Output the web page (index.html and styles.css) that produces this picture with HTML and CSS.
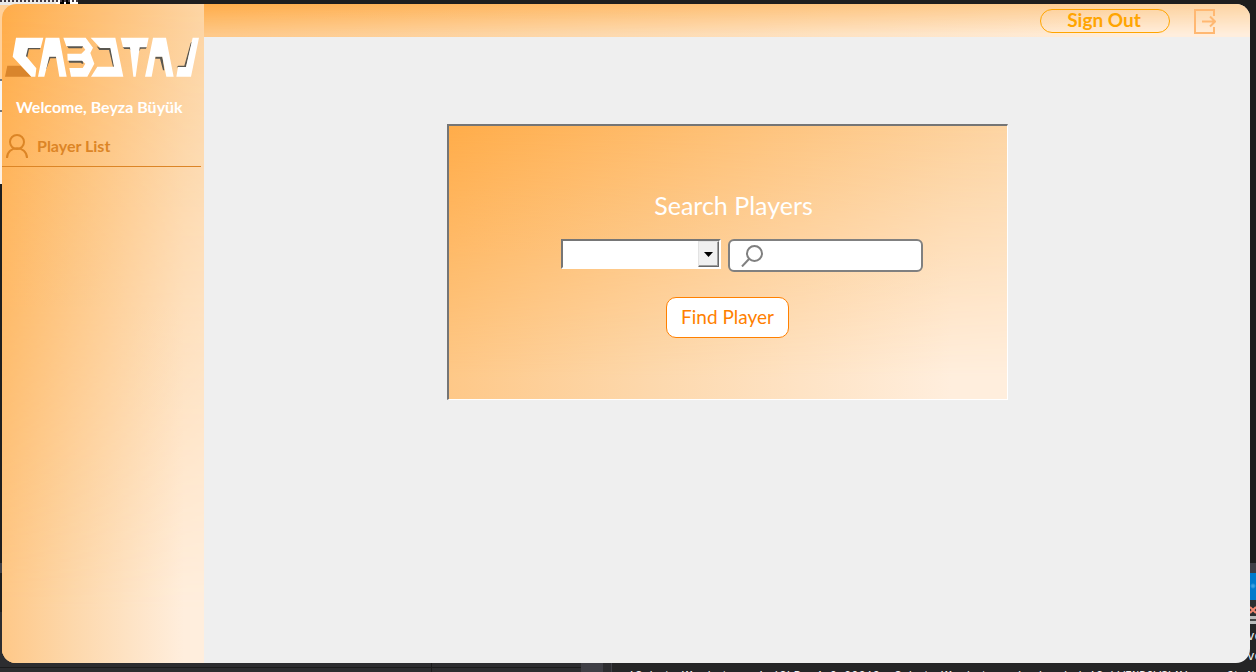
FILE: index.html
```html
<!DOCTYPE html>
<html lang="en">
<head>
<meta charset="utf-8">
<title>Sabotaj</title>
<link rel="stylesheet" href="styles.css">
</head>
<body>
<div class="desktop" aria-hidden="true">
  <div class="toolbar-scrap"></div>
  <div class="dialog-scrap"></div>
  <div class="blue-scrap"></div>
  <div class="error-scrap"><svg viewBox="0 0 7 16"><path d="M1 7L7 13M7 7L1 13"/></svg></div>
  <div class="tab-scrap"></div>
  <pre class="console">'SabotajMarket.exe' (CLR v4.0.30319: SabotajMarket.exe): Loaded 'C:\WINDOWS\Microsoft.ve
'SabotajMarket.exe' (CLR v4.0.30319: SabotajMarket.exe): Loaded 'C:\WINDOWS\Microsoft.ve
'SabotajMarket.exe' (CLR v4.0.30319: SabotajMarket.exe): Loaded 'C:\WINDOWS\Microsoft.Ne</pre>
</div>
<div class="window">
  <aside class="sidebar glow">
    <svg class="logo" viewBox="15 112 585 120" role="img" aria-label="Sabotaj">
      <path fill="#d9852c" d="M22 198H62L94 231H15z"/>
      <g fill="#5a5750">
        <path d="M80 144H121L120 149H87L82 172H76z"/>
        <path d="M147 170H168V176H151L139 208H134z"/>
        <path d="M200 138H250L246 146H206zM204 180H248L250 192H246L242 189H208z"/>
        <path d="M290 140L299 144H332L343 201H339L327 151H298z"/>
        <path d="M368 142H391L393 152 388 148H373zM418 142H440L438 147H422L417 155z"/>
        <path d="M466 170H487L493 212H489L480 177H466z"/>
        <path d="M576 126L558 203H530L535 198H553L572 130z"/>
      </g>
      <g fill="#fff">
        <path d="M48 114H130L122 145H84L78 169 109 206 106 231H94L38 171z"/>
        <path d="M137 114H178L200 231H178L168 171H148L133 231H114z"/>
        <path d="M190 114H257L279 144 271 160 283 192 262 231H213L208 205H248L256 192 246 183H203L202 162H244L256 150 248 140H199z"/>
        <path d="M272 114H346L370 231H273L292 201H342L331 145H301z"/>
        <path d="M362 114H446L440 143H419L407 231H400L390 143H369z"/>
        <path d="M459 114H498L521 231H499L487 171H466L455 231H435z"/>
        <path d="M578 114H597L573 231H529L534 202H558z"/>
      </g>
    </svg>
    <p class="welcome">Welcome, Beyza Büyük</p>
    <nav>
      <a class="nav-link" href="#">
        <svg class="user-icon" viewBox="0 0 24 26" aria-hidden="true"><circle cx="12" cy="9" r="7"/><path d="M2 25C2 12 22 12 22 25"/></svg>
        Player List
      </a>
    </nav>
  </aside>
  <div class="content">
    <header class="topbar glow">
      <button class="signout" type="button">Sign Out</button>
      <button class="exit" type="button" aria-label="Exit">
        <svg viewBox="0 0 22 25" aria-hidden="true"><path d="M20 7V1H1V24H20V18M8 12.500H21M16 7.500L21 12.500L16 17.500"/></svg>
      </button>
    </header>
    <main class="main">
      <form class="panel glow">
        <h1 class="title">Search Players</h1>
        <div class="fields">
          <div class="combo">
            <select aria-label="Search by"><option></option></select>
            <span class="combo-arrow"><svg viewBox="0 0 9 5" aria-hidden="true"><path d="M0 0H9L4.500 5z"/></svg></span>
          </div>
          <label class="search">
            <svg viewBox="0 0 22 22" aria-hidden="true"><circle cx="13.500" cy="8.500" r="7.500"/><path d="M8 14L1 21.500"/></svg>
            <input type="text" aria-label="Search">
          </label>
        </div>
        <button class="find" type="button">Find Player</button>
      </form>
    </main>
  </div>
</div>
</body>
</html>
```
FILE: styles.css
```css
* { box-sizing: border-box; }

body {
  margin: 0;
  min-height: 100vh;
  display: flex;
  padding: 4px 6px 9px 2px;
  background: #1e1e1e;
  font-family: Lato, "Open Sans", sans-serif;
  position: relative;
  overflow: hidden;
}

button, input, select { font: inherit; }

/* Desktop showing around the window */
.desktop {
  position: absolute;
  inset: 0;
  overflow: hidden;
  background:
    linear-gradient(#1b1b1c, #1b1b1c) 0 667px / 581px 1px no-repeat,
    linear-gradient(#1b1b1c, #1b1b1c) 431px 100% / 1px 12px no-repeat,
    linear-gradient(#3f3f46, #3f3f46) 581px 100% / 22px 12px no-repeat,
    linear-gradient(#3f3f46, #3f3f46) 611px 100% / 1px 12px no-repeat,
    linear-gradient(#2d2d30, #2d2d30) 0 100% / 612px 60px no-repeat,
    linear-gradient(#252526, #252526) 100% 100% / 644px 72px no-repeat,
    linear-gradient(#3f3f46, #3f3f46) 0 563px / 100% 10px no-repeat,
    #1e1e1e;
}

.toolbar-scrap {
  position: absolute;
  top: 0;
  left: 0;
  width: 78px;
  height: 5px;
  background: linear-gradient(90deg, transparent 56px, #fff 56px 60px, #000 60px 64px, #fff 64px 66px, #000 66px 70px, #fff 70px), #e8e8e8;
  border-top: 2px dotted #403840;
}

.dialog-scrap {
  position: absolute;
  top: 5px;
  left: 0;
  width: 16px;
  height: 179px;
  background: linear-gradient(#ffd09a 74px, #777 74px 76px, #f6f6f6 76px 105px, #777 105px 107px, #fdf0e2 107px);
}

.blue-scrap, .error-scrap, .tab-scrap {
  position: absolute;
  right: 0;
  width: 7px;
}

.blue-scrap { top: 573px; height: 27px; background: radial-gradient(circle at 4px 13px, #3da0e0 1px, #007acc 3px); }
.error-scrap { top: 600px; height: 16px; background: #2d2d30; }
.error-scrap svg { display: block; width: 7px; height: 16px; fill: none; stroke: #f48771; stroke-width: 2; }
.tab-scrap { top: 616px; height: 8px; background: linear-gradient(#bbb 3px, #444 3px 5px, #bbb 5px); }

.console {
  position: absolute;
  top: 627px;
  left: 628px;
  margin: 0;
  color: #f1f1f1;
  font: 12px/20px "Liberation Mono", monospace;
}

/* Application window */
.window {
  flex: 1;
  display: flex;
  position: relative;
  overflow: hidden;
  border-radius: 14px;
  background: #efefef;
}

/* Four-corner gradient: one ramp along the top, another fading in toward the bottom */
.glow {
  position: relative;
  isolation: isolate;
  background: linear-gradient(90deg, #ffad4a, #fdd5a4);
}

.glow::before {
  content: "";
  position: absolute;
  inset: 0;
  z-index: -1;
  background: linear-gradient(90deg, #fec888, #fdd8ac 36%, #ffeedd 90%);
  -webkit-mask-image: linear-gradient(transparent, #000 92%);
  mask-image: linear-gradient(transparent, #000 92%);
}

.sidebar { width: 202px; padding-top: 33px; }

.logo { display: block; width: 195px; height: 40px; margin-left: 3px; }

.welcome {
  margin: 20px 0 0 14px;
  color: #fff;
  font-size: 16px;
  font-weight: 700;
  line-height: 20px;
}

.nav-link {
  display: flex;
  align-items: center;
  gap: 8px;
  height: 42px;
  margin: 8px 3px 0 0;
  padding-left: 3px;
  border-bottom: 1px solid #dc8526;
  color: #dc8526;
  font-size: 16px;
  font-weight: 700;
  text-decoration: none;
}

.user-icon { width: 24px; height: 26px; fill: none; stroke: #dc8526; stroke-width: 2; }

.content { flex: 1; display: flex; flex-direction: column; }

.topbar {
  height: 33px;
  display: flex;
  align-items: center;
  justify-content: flex-end;
  gap: 24px;
  padding: 1px 34px 0 0;
}

.signout {
  width: 130px;
  height: 24px;
  padding: 0 2px 2px 0;
  border: 1px solid #ffa500;
  border-radius: 12px;
  background: transparent;
  color: #ffa500;
  font-size: 19px;
  font-weight: 700;
  line-height: 20px;
}

.exit { display: flex; padding: 0; border: 0; background: none; }
.exit svg { width: 22px; height: 25px; fill: none; stroke: #ffb872; stroke-width: 2; }

.main { flex: 1; padding-top: 87px; }

.panel {
  display: flex;
  flex-direction: column;
  align-items: center;
  width: 561px;
  height: 276px;
  margin: 0 auto;
  padding-top: 63px;
  border: solid;
  border-width: 2px 1px 1px 2px;
  border-color: #757575 #fff #fff #757575;
}

.title {
  margin: 0;
  padding-left: 12px;
  color: #fff;
  font-size: 25px;
  font-weight: 400;
  line-height: 32px;
}

.fields { display: flex; align-items: flex-start; gap: 7px; margin-top: 18px; padding-left: 29px; }

.combo {
  display: flex;
  position: relative;
  width: 160px;
  height: 30px;
  border: 2px solid;
  border-color: #767676 #fff #fff #767676;
  background: #fff;
}

.combo select { flex: 1; border: 0; background: #fff; appearance: none; }

.combo-arrow {
  position: absolute;
  top: 0;
  right: 0;
  bottom: 0;
  display: flex;
  align-items: center;
  justify-content: center;
  width: 21px;
  border: 1px solid;
  border-color: #e3e3e3 #696969 #696969 #e3e3e3;
  box-shadow: inset -1px -1px #a0a0a0;
  background: #f0f0f0;
  pointer-events: none;
}

.combo-arrow svg { width: 9px; height: 5px; }

.search {
  display: flex;
  align-items: center;
  gap: 8px;
  width: 195px;
  height: 33px;
  padding: 0 8px 0 11px;
  border: 2px solid #808080;
  border-radius: 6px;
  background: #fff;
}

.search svg { flex: none; width: 22px; height: 22px; fill: none; stroke: #808080; stroke-width: 2; }
.search input { flex: 1; min-width: 0; border: 0; outline: 0; background: transparent; }

.find {
  width: 123px;
  height: 41px;
  margin-top: 25px;
  padding: 0 0 3px;
  border: 1px solid #ff8000;
  border-radius: 10px;
  background: #fff;
  color: #ff8000;
  font-size: 19px;
}
```
